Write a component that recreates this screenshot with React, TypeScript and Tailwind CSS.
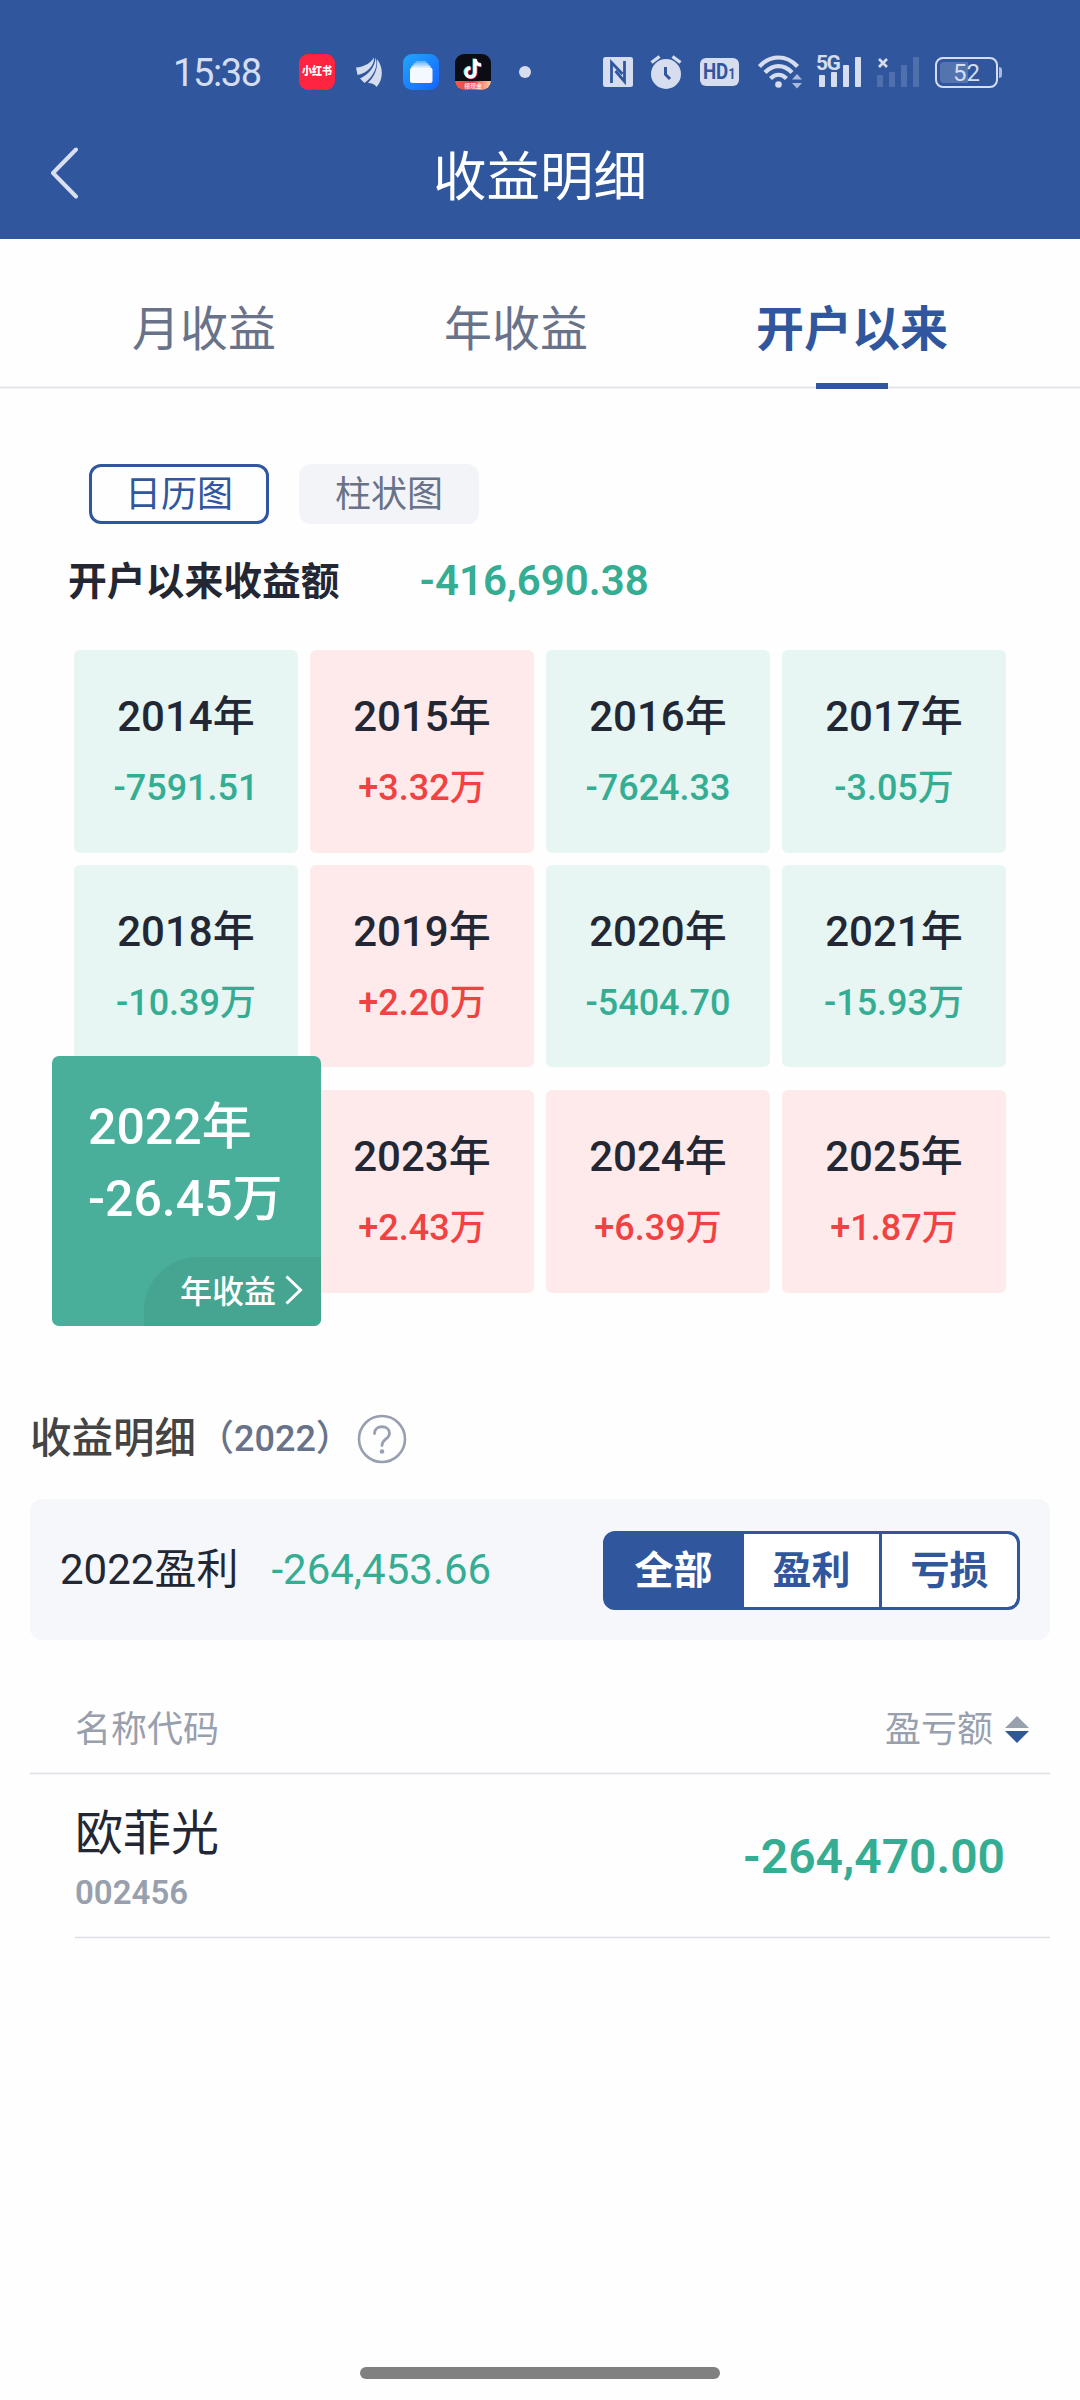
type Year = { year: string; value: string; selected?: boolean };

const YEAR_ROWS: Year[][] = [
  [
    { year: '2014年', value: '-7591.51' },
    { year: '2015年', value: '+3.32万' },
    { year: '2016年', value: '-7624.33' },
    { year: '2017年', value: '-3.05万' },
  ],
  [
    { year: '2018年', value: '-10.39万' },
    { year: '2019年', value: '+2.20万' },
    { year: '2020年', value: '-5404.70' },
    { year: '2021年', value: '-15.93万' },
  ],
  [
    { year: '2022年', value: '-26.45万', selected: true },
    { year: '2023年', value: '+2.43万' },
    { year: '2024年', value: '+6.39万' },
    { year: '2025年', value: '+1.87万' },
  ],
];

const ROW_STYLES = ['h-[203px]', 'h-[202px] mt-3', 'h-[203px] mt-[23px]'];

const StatusBar = () => {
  return (
    <div className="h-[115px] pt-[29px] pl-[173px] pr-[78px] flex items-center text-[#d5ddef]">
      <span className="w-[126px] pt-[2px] text-[38px] leading-[44px] tracking-[-1.4px]">15:38</span>

      <div className="size-9 rounded-[9px] bg-[#ff2440] flex items-center justify-center">
        <span className="text-[10px] leading-none font-black text-white scale-y-115">小红书</span>
      </div>

      <svg className="ml-[21px]" width="26" height="30" viewBox="0 0 26 30" fill="currentColor">
        <path d="M0 10.500C7 10 14 7 18 0.500C18.500 8 12 16 1.500 18Z" />
        <path d="M4 21.500C13 17 19 10 19.500 0.500C23 9 17 20 8.500 26Z" />
        <path d="M12 26C19 19 22 11 21 2C28 11 27 23 20.500 30C19 27.500 16 26 12 26Z" />
      </svg>

      <svg className="ml-[21px]" width="36" height="36" viewBox="0 0 36 36">
        <defs>
          <linearGradient id="files" x1="0" y1="0" x2="1" y2="1">
            <stop offset="0" stopColor="#21a6fb" />
            <stop offset="1" stopColor="#1463ff" />
          </linearGradient>
        </defs>
        <rect width="36" height="36" rx="9" fill="url(#files)" />
        <rect x="12.500" y="7" width="11" height="4" rx="1" fill="#64b9fb" />
        <rect x="10.500" y="9.200" width="15" height="4" rx="1" fill="#9dd1fd" />
        <rect x="8.500" y="11.500" width="19" height="4" rx="1" fill="#cfe6fe" />
        <rect x="7" y="13.500" width="22.500" height="15.500" rx="2.500" fill="#f4f8ff" />
      </svg>

      <div className="ml-4 size-9 rounded-[9px] bg-[#0c0c14] overflow-hidden flex flex-col items-center">
        <svg className="mt-[3px]" width="20" height="24" viewBox="0 0 20 24" fill="none" strokeWidth="3.400">
          <g stroke="#27e8e6" transform="translate(-0.8 -0.6)">
            <path d="M12 2V15.500A4.500 4.500 0 1 1 7.500 11M12 2C12 5.500 14.500 7.800 18 8" />
          </g>
          <g stroke="#fb2b55" transform="translate(0.8 0.6)">
            <path d="M12 2V15.500A4.500 4.500 0 1 1 7.500 11M12 2C12 5.500 14.500 7.800 18 8" />
          </g>
          <path stroke="#fff" d="M12 2V15.500A4.500 4.500 0 1 1 7.500 11M12 2C12 5.500 14.500 7.800 18 8" />
        </svg>
        <div className="w-full h-[9px] bg-linear-to-r from-[#e9604f] via-[#f32d57] to-[#f6cfa2] flex justify-center">
          <span className="text-[6px] leading-[9px] font-bold text-[#ffe3d2] whitespace-nowrap">领现金</span>
        </div>
      </div>

      <div className="ml-7 size-3 rounded-full bg-current" />

      {/* system icons */}
      <div className="ml-auto flex items-center">
        <svg width="30" height="30" viewBox="0 0 30 30">
          <rect width="30" height="30" rx="2.500" fill="currentColor" />
          <path
            d="M8.500 26V5.500L19.500 17M21.500 4V24.500L12.500 14"
            fill="none"
            stroke="#30579e"
            strokeWidth="2.800"
          />
        </svg>

        <svg className="ml-[17px]" width="32" height="34" viewBox="0 0 32 34">
          <circle cx="16" cy="19" r="15" fill="currentColor" />
          <path d="M1.500 7.500L9.500 1.500M30.500 7.500L22.500 1.500" stroke="currentColor" strokeWidth="3.400" />
          <path d="M15.500 12V19.500L20 24" fill="none" stroke="#30579e" strokeWidth="3" />
        </svg>

        <div className="ml-[18px] w-[39px] h-7 rounded-md bg-current flex items-center justify-center">
          <span className="text-[#30579e] text-[22px] leading-none font-bold scale-x-85 whitespace-nowrap">
            HD<span className="text-[15px]">1</span>
          </span>
        </div>

        <svg className="ml-[19px]" width="45" height="36" viewBox="0 0 45 36" fill="none">
          <g stroke="currentColor" strokeWidth="4.200">
            <path d="M1.500 12.500C12.500 0.500 28.500 0.500 39.500 12.500" />
            <path d="M7 18.500C15 10 26 10 34 18.500" />
            <path d="M12.500 24.500C17.500 19.500 23.500 19.500 28.500 24.500" />
          </g>
          <circle cx="20.500" cy="30.500" r="3.300" fill="currentColor" />
          <path d="M34 25.500L39 20L44 25.500ZM34 29L39 34.500L44 29Z" fill="#a9bade" />
        </svg>

        <div className="relative ml-[13px] h-9 flex items-end pl-[3px] pb-[3px] gap-[6px]">
          <span className="absolute left-0 -top-[2px] text-[21px] leading-[22px] font-bold tracking-[-1.500px]">
            5G
          </span>
          <div className="w-[6px] h-3 rounded-[1px] bg-current" />
          <div className="w-[6px] h-[15px] rounded-[1px] bg-current" />
          <div className="w-[6px] h-[22px] rounded-[1px] bg-current" />
          <div className="w-[6px] h-[30px] rounded-[1px] bg-current" />
        </div>

        <div className="relative ml-4 h-9 flex items-end pb-[3px] gap-[6px]">
          <svg className="absolute left-[1px] top-[4px]" width="10" height="10" viewBox="0 0 10 10">
            <path d="M1 1L9 9M9 1L1 9" stroke="currentColor" strokeWidth="2.600" />
          </svg>
          <div className="w-[6px] h-3 rounded-[1px] bg-[#4f70ad]" />
          <div className="w-[6px] h-[15px] rounded-[1px] bg-[#4f70ad]" />
          <div className="w-[6px] h-[22px] rounded-[1px] bg-[#4f70ad]" />
          <div className="w-[6px] h-[30px] rounded-[1px] bg-[#4f70ad]" />
        </div>

        <div className="ml-4 flex items-center gap-[1px]">
          <div className="w-[63px] h-[31px] rounded-[8px] border-2 border-current p-[3px] relative">
            <div className="w-[28px] h-full rounded-l-[4px] bg-[#5474b0]" />
            <span className="absolute inset-0 text-center text-[24px] leading-[28px]">52</span>
          </div>
          <div className="w-[3px] h-[11px] rounded-r-sm bg-[#a9bade]" />
        </div>
      </div>
    </div>
  );
};

const YearCard = ({ item }: { item: Year }) => {
  if (item.selected) {
    return (
      <div className="relative">
        <div className="absolute -left-[22px] -top-[34px] w-[269px] h-[270px] rounded-[7px] overflow-hidden bg-[#4aaf9a] pt-[35px] pl-9 text-white font-medium text-[50px] leading-[72px] z-10">
          <p>{item.year}</p>
          <p>{item.value}</p>
          <div className="absolute right-0 bottom-0 w-[177px] h-[69px] rounded-tl-[54px] bg-[#46a591] flex items-center pl-[36px] pt-[1px] text-[32px] leading-[40px] font-medium">
            年收益
            <svg className="ml-[9px] -mt-1" width="18" height="30" viewBox="0 0 18 30" fill="none">
              <path d="M1.500 1.500L15.500 15L1.500 28.500" stroke="currentColor" strokeWidth="3" />
            </svg>
          </div>
        </div>
      </div>
    );
  }

  const gain = item.value.startsWith('+');

  return (
    <div
      className={`rounded-[6px] pt-[42px] text-center font-medium ${gain ? 'bg-[#ffeaeb]' : 'bg-[#e7f6f3]'}`}
    >
      <p className="text-[42px] leading-[50px] text-[#222733]">{item.year}</p>
      <p className={`mt-6 text-[36px] leading-[44px] ${gain ? 'text-[#f04242]' : 'text-[#35ad93]'}`}>
        {item.value}
      </p>
    </div>
  );
};

const Divider = ({ className = '' }: { className?: string }) => (
  <div className={`h-[3px] border-y border-[#f5f5f8] bg-[#dfe1e7] ${className}`} />
);

const App = () => {
  return (
    <div
      lang="zh-CN"
      className="w-[1080px] h-[2400px] bg-[#fefefe] flex flex-col font-['Roboto','Noto_Sans_CJK_SC',sans-serif] text-[#222733]"
    >
      <header className="h-[239px] bg-[#30579e]">
        <StatusBar />
        <div className="relative h-[124px] pt-[1px] flex items-center justify-center text-white">
          <svg
            className="absolute left-[50px] top-[32px]"
            width="28"
            height="52"
            viewBox="0 0 28 52"
            fill="none"
          >
            <path
              d="M26 2.500L3 26L26 49.500"
              stroke="#d9dff0"
              strokeWidth="4"
              strokeLinecap="round"
              strokeLinejoin="round"
            />
          </svg>
          <h1 className="text-[53.500px] leading-[64px]">收益明细</h1>
        </div>
      </header>

      <nav className="h-[150px] flex flex-col justify-between">
        <div className="pt-[61px] px-[132px] flex justify-between text-[48px] leading-[60px] text-[#687288]">
          <span>月收益</span>
          <span>年收益</span>
          <span className="relative font-bold text-[#30579e]">
            开户以来
            <i className="absolute left-[60px] top-[83px] w-[72px] h-[6px] bg-[#30579e] z-10" />
          </span>
        </div>
        <Divider />
      </nav>

      <section className="pt-[75px] px-[74px]">
        <div className="flex gap-[30px] pl-[15px] text-[36px]">
          <button className="w-[180px] h-[60px] rounded-[12px] border-3 border-[#30579e] text-[#30579e] leading-[56px]">
            日历图
          </button>
          <button className="w-[180px] h-[60px] rounded-[12px] bg-[#f3f4f7] text-[#687288] leading-[62px]">
            柱状图
          </button>
        </div>

        <div className="mt-8 -ml-[6px] h-[50px] flex items-baseline gap-[80px] leading-[50px]">
          <span className="text-[38.800px] font-bold">开户以来收益额</span>
          <span className="text-[42px] font-semibold text-[#35ad93]">-416,690.38</span>
        </div>

        <div className="mt-11">
          {YEAR_ROWS.map((row, i) => (
            <div key={i} className={`grid grid-cols-4 gap-x-3 ${ROW_STYLES[i]}`}>
              {row.map((item) => (
                <YearCard key={item.year} item={item} />
              ))}
            </div>
          ))}
        </div>
      </section>

      <section className="mt-[116px] px-[30px]">
        <div className="flex items-center h-[60px]">
          <h2 className="text-[41.500px] leading-[60px] text-[#444] font-medium">收益明细</h2>
          <span className="ml-[2px] text-[36px] leading-[60px] font-medium text-[#687288]">（2022）</span>
          <svg className="ml-[5px]" width="50" height="50" viewBox="0 0 50 50" fill="none">
            <circle cx="25" cy="25" r="23" stroke="#98a0b0" strokeWidth="2.600" />
            <path
              d="M17.500 19.500C17.500 10.500 32.500 10.500 32.500 19.500C32.500 25 25 25 25 31.500"
              stroke="#98a0b0"
              strokeWidth="2.800"
              strokeLinecap="round"
            />
            <circle cx="25" cy="37.500" r="2.300" fill="#98a0b0" />
          </svg>
        </div>

        <div className="mt-[30px] h-[141px] rounded-[12px] bg-[#f5f7fb] flex items-center pl-[30px] pr-[30px] text-[42px] leading-[50px]">
          <span>2022盈利</span>
          <span className="ml-[33px] text-[#35ad93]">-264,453.66</span>
          <div className="ml-auto mt-[1px] w-[417px] h-[79px] rounded-[12px] border-3 border-[#30579e] bg-[#30579e] overflow-hidden flex gap-[3px] text-[39px] leading-[75px] font-bold text-center text-[#30579e]">
            <div className="flex-1 text-white">全部</div>
            <div className="flex-1 bg-white">盈利</div>
            <div className="flex-1 bg-white rounded-r-[9px]">亏损</div>
          </div>
        </div>

        <div className="h-[132px] pt-[47px] pl-[45px] pr-[21px] flex items-center justify-between text-[36px] leading-[48px] text-[#989fad]">
          <span>名称代码</span>
          <span className="flex items-center gap-[12px]">
            盈亏额
            <svg width="24" height="28" viewBox="0 0 24 28">
              <path d="M0 12L12 0L24 12Z" fill="#989fad" />
              <path d="M0 15L12 27L24 15Z" fill="#30579e" />
            </svg>
          </span>
        </div>
        <Divider />

        <div className="h-[161px] pl-[45px] pr-[45px] flex items-center justify-between">
          <div className="pt-[7px]">
            <p className="text-[48px] leading-[60px]">欧菲光</p>
            <p className="mt-[7px] text-[33px] leading-[44px] font-semibold text-[#989fad]">002456</p>
          </div>
          <span className="pt-[2px] text-[48px] leading-[60px] font-semibold text-[#35ad93]">-264,470.00</span>
        </div>
        <Divider className="ml-[45px]" />
      </section>

      <div className="mt-auto mb-[21px] mx-auto w-[360px] h-3 rounded-full bg-[#808080]" />
    </div>
  );
};

export default App;
